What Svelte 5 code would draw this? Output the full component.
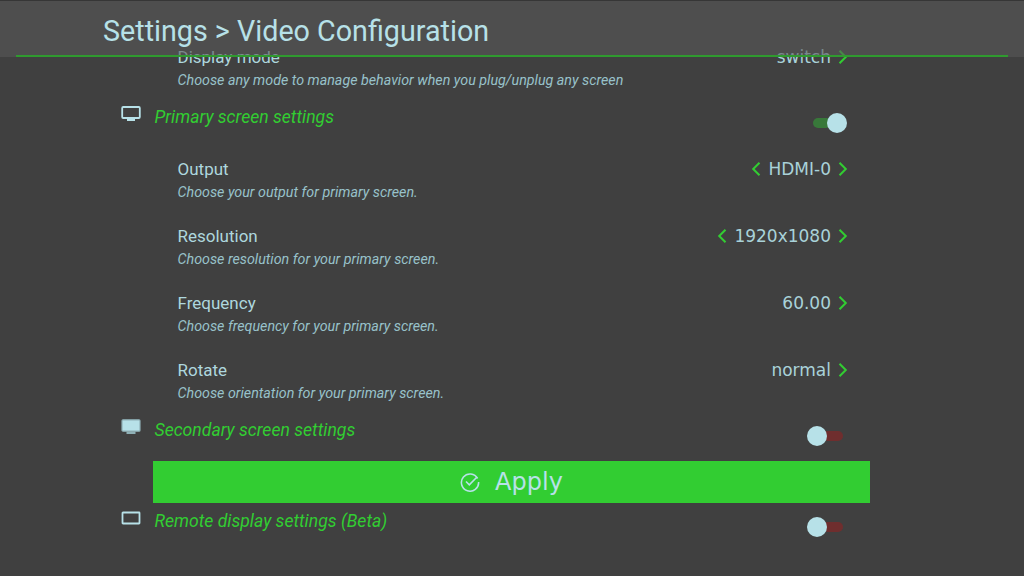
<script>
	const primaryRows = [
		{ label: 'Output', desc: 'Choose your output for primary screen.', value: 'HDMI-0', prev: true },
		{ label: 'Resolution', desc: 'Choose resolution for your primary screen.', value: '1920x1080', prev: true },
		{ label: 'Frequency', desc: 'Choose frequency for your primary screen.', value: '60.00', prev: false },
		{ label: 'Rotate', desc: 'Choose orientation for your primary screen.', value: 'normal', prev: false }
	];
</script>

{#snippet chevron(dir)}
	<svg class="chev" width="10" height="14" viewBox="0 0 10 14">
		<path d={dir === 'left' ? 'M8.5 0.7 L2.2 7 L8.5 13.3' : 'M1.5 0.7 L7.8 7 L1.5 13.3'} fill="none" stroke="#32cd32" stroke-width="2" />
	</svg>
{/snippet}

{#snippet row(r)}
	<div class="row">
		<div class="text">
			<div class="label">{r.label}</div>
			<div class="desc">{r.desc}</div>
		</div>
		<div class="value">
			{#if r.prev}{@render chevron('left')}{/if}
			<span>{r.value}</span>
			{@render chevron('right')}
		</div>
	</div>
{/snippet}

<div class="screen">
	<header class="header">
		<h1>Settings &gt; Video Configuration</h1>
		<div class="rule"></div>
	</header>

	<div class="list">
		{@render row({ label: 'Display mode', desc: 'Choose any mode to manage behavior when you plug/unplug any screen', value: 'switch', prev: false })}

		<div class="section first">
			<svg class="icon" width="20" height="16" viewBox="0 0 20 16">
				<rect x="1.2" y="1" width="17.6" height="11" rx="1" fill="none" stroke="#b7e1e8" stroke-width="1.8" />
				<rect x="6" y="13" width="8" height="2" fill="#b7e1e8" />
			</svg>
			<span class="title">Primary screen settings</span>
			<div class="toggle on"><i></i><b></b></div>
		</div>

		{#each primaryRows as r}
			{@render row(r)}
		{/each}

		<div class="section second">
			<svg class="icon" width="20" height="16" viewBox="0 0 20 16">
				<rect x="1" y="0.8" width="18" height="11.4" rx="1" fill="#b7e1e8" stroke="#8fb0b6" stroke-width="1.2" />
				<rect x="5.5" y="12.5" width="9" height="2.5" fill="#8fb0b6" />
			</svg>
			<span class="title">Secondary screen settings</span>
			<div class="toggle off"><b></b><i></i></div>
		</div>

		<button class="apply">
			<svg width="20" height="20" viewBox="0 0 20 20">
				<path d="M17.6 6.5 A8.6 8.6 0 1 0 18.6 10" fill="none" stroke="#b7e1e8" stroke-width="1.6" />
				<path d="M6 9.5 L9.3 12.8 L17 5" fill="none" stroke="#b7e1e8" stroke-width="1.6" />
			</svg>
			<span>Apply</span>
		</button>

		<div class="section third">
			<svg class="icon" width="20" height="16" viewBox="0 0 20 16">
				<rect x="1.5" y="1.5" width="17" height="11" rx="0.5" fill="none" stroke="#b7e1e8" stroke-width="1.8" />
			</svg>
			<span class="title">Remote display settings (Beta)</span>
			<div class="toggle off"><b></b><i></i></div>
		</div>
	</div>
</div>

<style>
	:global(body) {
		margin: 0;
		background: #404040;
	}

	.screen {
		position: relative;
		width: 1024px;
		height: 576px;
		overflow: hidden;
		background: #404040;
		color: #b7e1e8;
		font-family: Roboto, sans-serif;
	}

	.header {
		position: absolute;
		top: 0;
		left: 0;
		right: 0;
		z-index: 2;
		height: 57px;
		background: rgba(88, 88, 88, 0.6);
		border-top: 1px solid #363636;
		box-sizing: border-box;
	}

	.header h1 {
		margin: 0;
		padding: 12px 0 0 103px;
		font-size: 28.7px;
		line-height: 36px;
		font-weight: 400;
		color: #b7e1e8;
	}

	.rule {
		position: absolute;
		left: 16px;
		right: 16px;
		top: 54px;
		height: 2px;
		background: #2f9a2f;
	}

	.list {
		padding: 46px 154px 0 154px;
		display: flex;
		flex-direction: column;
	}

	.row {
		height: 67px;
		flex: none;
		display: flex;
		justify-content: space-between;
		padding-left: 23.5px;
		padding-right: 22px;
		box-sizing: border-box;
	}

	.label {
		font-size: 17px;
		line-height: 22px;
		color: #aed7de;
	}

	.desc {
		font-size: 14.27px;
		line-height: 18px;
		font-style: italic;
		margin-top: 3px;
		color: #98c2ca;
	}

	.value {
		display: flex;
		align-items: center;
		gap: 7px;
		height: 22px;
		font-family: 'DejaVu Sans', sans-serif;
		font-size: 17px;
		color: #a9d2d9;
	}

	.section {
		position: relative;
		flex: none;
	}

	.section.first {
		height: 53px;
		margin-top: -8px;
	}

	.section.second {
		height: 43px;
		margin-top: -8px;
	}

	.section.third {
		height: 52px;
		margin-top: 6px;
	}

	.icon {
		position: absolute;
		left: -33px;
		top: 1px;
	}

	.section.third .icon {
		top: 2px;
	}

	.title {
		display: block;
		font-size: 17.6px;
		line-height: 24px;
		font-style: italic;
		color: #32cd32;
		padding-left: 0.5px;
	}

	.toggle {
		position: absolute;
		left: 653px;
		top: 8px;
		display: flex;
		align-items: center;
		height: 20px;
	}

	.toggle i {
		display: block;
		width: 18px;
		height: 10px;
		border-radius: 5px;
	}

	.toggle b {
		display: block;
		width: 20px;
		height: 20px;
		border-radius: 50%;
		background: #b7e1e8;
		position: relative;
		z-index: 1;
	}

	.toggle.on {
		left: 659px;
	}

	.toggle.on i {
		background: #38783a;
		margin-right: -4px;
	}

	.toggle.off i {
		background: #6f2e2e;
		margin-left: -4px;
		width: 20px;
	}

	.apply {
		flex: none;
		width: 717px;
		height: 42px;
		margin-left: -1px;
		display: flex;
		align-items: center;
		justify-content: center;
		gap: 15px;
		background: #32cd32;
		border: none;
		color: #b7e1e8;
		font-family: 'DejaVu Sans', sans-serif;
		font-size: 24px;
		padding: 0;
	}
</style>
